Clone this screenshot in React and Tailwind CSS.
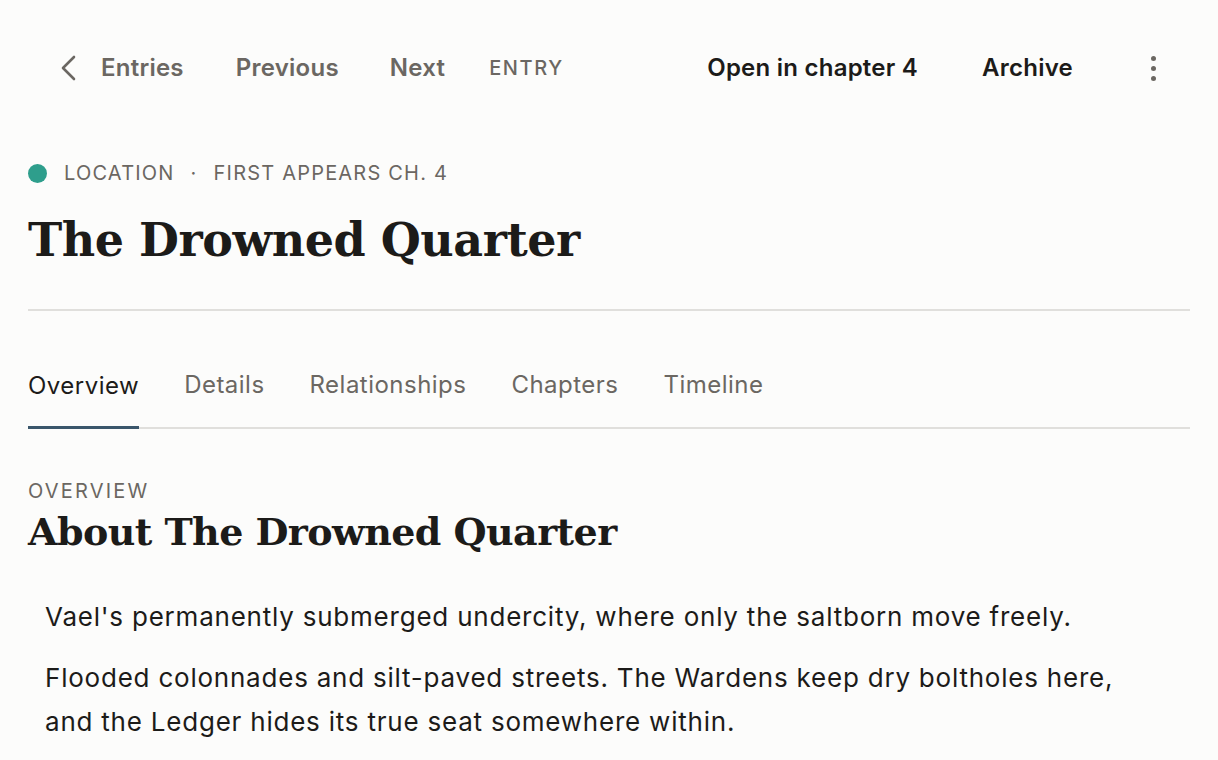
const SANS = { fontFamily: "Inter, 'Noto Sans', sans-serif" };
const SERIF = { fontFamily: "'DejaVu Serif', 'Liberation Serif', serif" };

const TABS = ["Overview", "Details", "Relationships", "Chapters", "Timeline"];

function TopBar() {
  return (
    <div className="flex items-center h-[48px] pl-[61px] pr-[54px] text-[24px] font-semibold tracking-[0.01em] text-[#6b6762]">
      <button className="flex items-center gap-[25px] text-[#6b6762]">
        <svg width="15" height="26" viewBox="0 0 15 26" fill="none" stroke="currentColor" strokeWidth="2.6" strokeLinecap="round" strokeLinejoin="round">
          <polyline points="13,2 2,13 13,24" />
        </svg>
        <span>Entries</span>
      </button>
      <button className="ml-[52px]">Previous</button>
      <button className="ml-[51px]">Next</button>
      <span className="ml-[44px] text-[20px] font-medium tracking-[0.08em]">ENTRY</span>
      <div className="ml-auto flex items-center">
        <button className="text-[#1c1b19]">Open in chapter 4</button>
        <button className="ml-[64px] text-[#1c1b19]">Archive</button>
        <button className="ml-[70px] flex flex-col gap-[5px] items-center px-2">
          <span className="w-[5px] h-[5px] rounded-full bg-[#6b6762]" />
          <span className="w-[5px] h-[5px] rounded-full bg-[#6b6762]" />
          <span className="w-[5px] h-[5px] rounded-full bg-[#6b6762]" />
        </button>
      </div>
    </div>
  );
}

export default function App() {
  return (
    <div className="min-h-[760px] pt-[44px] bg-[#fcfcfb] text-[#1c1b19]" style={SANS}>
      <TopBar />

      <div className="px-[28px]">
        {/* META */}
        <div className="mt-[69px] flex items-center h-[24px] text-[20px] tracking-[0.06em] text-[#6b6762]">
          <span className="w-[19px] h-[19px] rounded-full bg-[#2e9e8c]" />
          <span className="ml-[17px]">LOCATION</span>
          <span className="mx-[16px]">·</span>
          <span>FIRST APPEARS CH. 4</span>
        </div>

        <h1 className="mt-[25px] text-[46px] leading-[60px] font-bold tracking-[-0.01em]" style={SERIF}>
          The Drowned Quarter
        </h1>

        <div className="mt-[39px] h-[2px] bg-[#e0dfdc]" />

        {/* TABS */}
        <div className="mt-[59px] flex gap-[45px] border-b-2 border-[#e0dfdc]">
          {TABS.map((t, i) => (
            <button
              key={t}
              className={
                i === 0
                  ? "pb-[24px] text-[24px] leading-[30px] tracking-[0.02em] text-[#1c1b19] border-b-[3px] border-[#3a566b] -mb-[2px]"
                  : "pb-[27px] text-[24px] leading-[30px] tracking-[0.02em] text-[#6b6762]"
              }
            >
              {t}
            </button>
          ))}
        </div>

        {/* OVERVIEW */}
        <div className="mt-[50px] text-[20px] leading-[24px] tracking-[0.11em] text-[#6b6762]">
          OVERVIEW
        </div>
        <h2 className="mt-[3px] text-[38px] leading-[52px] font-bold tracking-[-0.015em]" style={SERIF}>
          About The Drowned Quarter
        </h2>

        <div className="mt-[37px] pl-[17px] text-[26px] leading-[44px] tracking-[0.03em] text-[#1c1b19]">
          <p>Vael's permanently submerged undercity, where only the saltborn move freely.</p>
          <p className="mt-[17px] max-w-[1090px]">
            Flooded colonnades and silt-paved streets. The Wardens keep dry boltholes here,
            and the Ledger hides its true seat somewhere within.
          </p>
        </div>
      </div>
    </div>
  );
}
